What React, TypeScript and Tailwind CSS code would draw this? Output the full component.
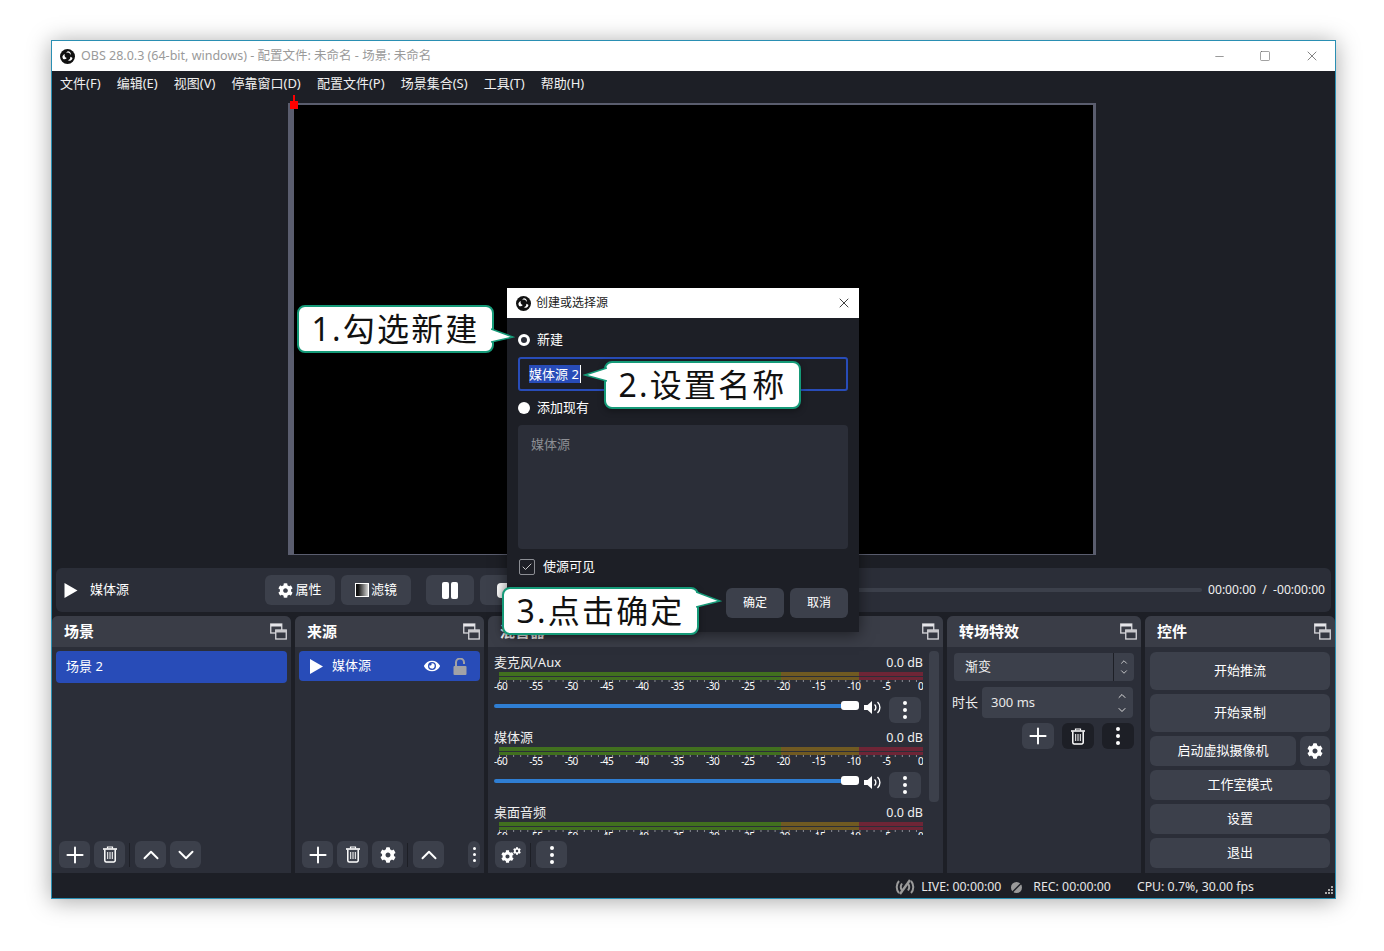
import React from 'react';
import { Plus, ChevronUp, ChevronDown, Minus, Square, X, Check } from 'lucide-react';
import { FaCog, FaEye } from 'react-icons/fa';

const ObsLogo = ({ size = 15 }: { size?: number }) => (
  <svg width={size} height={size} viewBox="0 0 24 24" className="shrink-0">
    <circle cx="12" cy="12" r="12" fill="#111" />
    <path d="M12.5 3.5a5 5 0 0 1 4.6 6.6 4.4 4.4 0 0 0-7-3.4A5 5 0 0 1 12.5 3.5z" fill="#fff" />
    <path d="M20 14.5a5 5 0 0 1-7.6 3.6 4.4 4.4 0 0 0 3.9-5.8 5 5 0 0 1 3.7 2.2z" fill="#fff" />
    <path d="M5 16a5 5 0 0 1 2.9-8 4.4 4.4 0 0 0 3 6.4A5 5 0 0 1 5 16z" fill="#fff" />
  </svg>
);

const DockIcon = () => (
  <svg width="17" height="17" viewBox="0 0 17 17" className="shrink-0">
    <rect x="0.75" y="1" width="11" height="9" fill="none" stroke="#d8d8dc" strokeWidth="1.3" />
    <rect x="0.75" y="1" width="11" height="2.5" fill="#e6e6ea" />
    <rect x="5.75" y="7" width="10.5" height="9" fill="#343741" stroke="#d8d8dc" strokeWidth="1.3" />
    <rect x="5.75" y="7" width="10.5" height="2.5" fill="#c8c8cc" />
  </svg>
);

const TrashIcon = () => (
  <svg width="16" height="17" viewBox="0 0 16 17" fill="none" stroke="#fff">
    <path d="M1 3h14" strokeWidth="1.6" />
    <path d="M5.5 2.5V1h5v1.5" strokeWidth="1.2" />
    <path d="M2.8 3.5v11a1.5 1.5 0 0 0 1.5 1.5h7.4a1.5 1.5 0 0 0 1.5-1.5v-11" strokeWidth="1.5" />
    <path d="M5.7 6v7M8 6v7M10.3 6v7" strokeWidth="1" />
  </svg>
);

const PlayIcon = ({ w = 13, h = 15 }: { w?: number; h?: number }) => (
  <svg width={w} height={h} viewBox="0 0 13 15" className="shrink-0">
    <path d="M0 0 13 7.5 0 15z" fill="#fff" />
  </svg>
);

const Dots = ({ size = 3 }: { size?: number }) => (
  <div className="flex flex-col items-center gap-[3px]">
    {[0, 1, 2].map(i => (
      <span key={i} className="rounded-full bg-white" style={{ width: size + 1, height: size + 1 }} />
    ))}
  </div>
);

const VolumeIcon = () => (
  <svg width="17" height="15" viewBox="0 0 17 15" fill="none">
    <path d="M0 5h3.5L8 1v13L3.5 10H0z" fill="#fff" />
    <path d="M10.5 4.5a4 4 0 0 1 0 6M13.5 2a7.5 7.5 0 0 1 0 11" stroke="#fff" strokeWidth="1.4" />
  </svg>
);

const IconBtn = ({ children, className = '' }: { children: React.ReactNode; className?: string }) => (
  <button className={`flex h-[27px] w-[31px] shrink-0 items-center justify-center rounded-md bg-[#3c404b] text-white ${className}`}>
    {children}
  </button>
);

const Sep = () => <div className="mr-px h-[24px] w-px bg-[#1d1f26]" />;

const Dock = ({ title, width, children }: { title: string; width: string; children: React.ReactNode }) => (
  <section className={`flex h-full shrink-0 flex-col overflow-hidden rounded-t-md bg-[#2b2e38] ${width}`}>
    <header className="flex h-[31px] shrink-0 items-center justify-between bg-[#3a3d47] pl-3 pr-1">
      <h2 className="text-[15px] font-bold text-white">{title}</h2>
      <DockIcon />
    </header>
    {children}
  </section>
);

const ticks = ['-60', '-55', '-50', '-45', '-40', '-35', '-30', '-25', '-20', '-15', '-10', '-5', '0'];

const Meter = () => (
  <div className="pl-[5px]">
    <div className="flex h-[8px] w-[424px] flex-col gap-px">
      {[0, 1].map(i => (
        <div key={i} className="flex flex-1">
          <div className="w-[282px] bg-[#41701f]" />
          <div className="w-[78px] bg-[#705a22]" />
          <div className="w-[64px] bg-[#6e2536]" />
        </div>
      ))}
    </div>
    <svg width="425" height="4" className="block">
      {Array.from({ length: 61 }).map((_, i) => (
        <line key={i} x1={i * 7.067 + 0.5} x2={i * 7.067 + 0.5} y1="0" y2={i % 5 === 0 ? 4 : 2} stroke="#8a8c94" />
      ))}
    </svg>
  </div>
);

const Channel = ({ name }: { name: string }) => (
  <div className="h-[75px] shrink-0">
    <div className="flex h-[20px] items-center justify-between pt-[2px] text-[13px] text-[#f0f0f0]">
      <span>{name}</span>
      <span className="text-[12.5px]">0.0 dB</span>
    </div>
    <Meter />
    <div className="-mt-[3px] flex h-[11px] w-[429px] justify-between text-[10px] leading-[11px] tracking-[-0.5px] text-white">
      {ticks.map(t => (
        <span key={t} className="w-[5px] whitespace-nowrap">{t}</span>
      ))}
    </div>
    <div className="mt-[6px] flex items-center">
      <div className="mb-[10px] flex w-[365px] items-center">
        <div className="h-1 w-[347px] rounded-l-full bg-[#2f7ed3]" />
        <div className="h-[9px] w-[18px] rounded-[3px] bg-white" />
      </div>
      <div className="mb-[6px] ml-[5px] w-[25px]"><VolumeIcon /></div>
      <button className="-mt-[1px] flex h-[26px] w-[32px] items-center justify-center rounded-md bg-[#3c404b]">
        <Dots />
      </button>
    </div>
  </div>
);

const CtrlBtn = ({ children, h = 'h-[30px]', className = 'w-full' }: { children: React.ReactNode; h?: string; className?: string }) => (
  <button className={`flex shrink-0 items-center justify-center rounded-md bg-[#3c404b] text-[13px] text-white ${h} ${className}`}>
    {children}
  </button>
);

const Callout = ({ text, className, tail }: { text: string; className: string; tail: React.ReactNode }) => (
  <div className={`absolute z-20 flex h-[48px] w-[197px] items-center justify-center rounded-lg border-2 border-[#159a78] bg-white text-[32px] tracking-[2.2px] text-[#111] shadow-[0_2px_6px_rgba(0,0,0,0.35)] ${className}`}>
    {text}
    {tail}
  </div>
);

const App: React.FC = () => {
  return (
    <div
      className="h-[951px] overflow-hidden bg-white pl-[51px] pt-[40px]"
      style={{ fontFamily: '"Noto Sans", "Noto Sans CJK SC", sans-serif' }}
    >
      <div className="relative flex h-[859px] w-[1285px] flex-col border border-[#2a8fb3] bg-[#1d1f26] shadow-[0_2px_22px_rgba(0,0,0,0.35)]">
        {/* title bar */}
        <div className="flex h-[30px] shrink-0 items-center bg-white pl-[8px] text-[12.5px] text-[#9a9a9a]">
          <ObsLogo />
          <span className="ml-[6px]">OBS 28.0.3 (64-bit, windows) - 配置文件: 未命名 - 场景: 未命名</span>
          <div className="ml-auto flex items-center text-[#555]">
            <Minus size={13} strokeWidth={1.1} className="mr-[33px]" />
            <Square size={12} strokeWidth={1.1} className="mr-[33px]" />
            <X size={16} strokeWidth={1.1} className="mr-[15px]" />
          </div>
        </div>

        {/* menu */}
        <nav className="flex h-[24px] shrink-0 items-center gap-[16.1px] pl-2 pt-px text-[13px] text-[#f0f0f0]">
          {['文件(F)', '编辑(E)', '视图(V)', '停靠窗口(D)', '配置文件(P)', '场景集合(S)', '工具(T)', '帮助(H)'].map(m => (
            <span key={m}>{m}</span>
          ))}
        </nav>

        {/* preview */}
        <div className="h-[473px] shrink-0 pl-[236px] pt-[8px]">
          <div className="relative h-[452px] w-[808px] border-b border-l-[6px] border-r-[3px] border-t-2 border-[#5a5d6e] bg-black">
            <div className="absolute -left-[3px] -top-[4px] h-[8px] w-[8px] -translate-x-[1px] bg-[#f00]" />
            <div className="absolute -left-[1px] -top-[10px] h-[7px] w-[2px] bg-[#f00]" />
          </div>
        </div>

        {/* transport */}
        <div className="ml-[4px] flex h-[44px] w-[1275px] shrink-0 items-center rounded-md bg-[#2b2e38] pl-[8px] pr-[6px] text-[13px] text-white">
          <PlayIcon w={14} h={15} />
          <span className="ml-[12px] w-[175px]">媒体源</span>
          <button className="flex h-[30px] w-[70px] items-center justify-center gap-[2px] rounded-md bg-[#3c404b]">
            <FaCog size={15} />属性
          </button>
          <button className="ml-[6px] flex h-[30px] w-[70px] items-center justify-center gap-[2px] rounded-md bg-[#3c404b]">
            <svg width="14" height="14" viewBox="0 0 14 14">
              <defs>
                <linearGradient id="flt" x1="0" x2="1" y1="0" y2="0">
                  <stop offset="0.2" stopColor="#111" />
                  <stop offset="1" stopColor="#ddd" />
                </linearGradient>
              </defs>
              <rect x="0.5" y="0.5" width="13" height="13" fill="url(#flt)" stroke="#fff" />
            </svg>
            滤镜
          </button>
          <button className="ml-[15px] flex h-[30px] w-[48px] items-center justify-center gap-[2px] rounded-md bg-[#3c404b]">
            <span className="h-[17px] w-[7px] rounded-[2px] bg-white" />
            <span className="h-[17px] w-[7px] rounded-[2px] bg-white" />
          </button>
          <button className="ml-[6px] flex h-[30px] w-[48px] items-center justify-center rounded-md bg-[#3c404b]">
            <span className="h-[15px] w-[15px] rounded-sm bg-white" />
          </button>
          <div className="ml-[20px] h-1 flex-1 rounded-full bg-[#3c404b]" />
          <span className="ml-[6px] text-[12.1px] text-[#f0f0f0]">00:00:00&nbsp;&nbsp;/&nbsp;&nbsp;-00:00:00</span>
        </div>

        {/* docks */}
        <div className="mt-[4px] flex h-[257px] shrink-0 gap-1">
          <Dock title="场景" width="w-[239px]">
            <div className="flex flex-1 flex-col justify-between px-1 pb-[5px] pt-1">
              <div className="flex h-[32px] items-center rounded-[4px] bg-[#284cb8] pl-[10px] text-[13px] text-white">场景 2</div>
              <div className="flex items-center gap-1 pl-[3px]">
                <IconBtn><Plus size={26} strokeWidth={1.8} /></IconBtn>
                <IconBtn><TrashIcon /></IconBtn>
                <Sep />
                <IconBtn><ChevronUp size={26} strokeWidth={1.8} /></IconBtn>
                <IconBtn><ChevronDown size={26} strokeWidth={1.8} /></IconBtn>
              </div>
            </div>
          </Dock>

          <Dock title="来源" width="w-[189px]">
            <div className="flex flex-1 flex-col justify-between px-1 pb-[5px] pt-1">
              <div className="flex h-[30px] items-center rounded-[4px] bg-[#284cb8] pl-[11px] text-[13px] text-white">
                <PlayIcon />
                <span className="ml-[9px]">媒体源</span>
                <FaEye size={16} className="ml-auto" />
                <svg width="14" height="17" viewBox="0 0 14 17" className="ml-[13px] mr-[13px]">
                  <path d="M3 8V4.5a4 4 0 0 1 8 0V6" fill="none" stroke="#a2a2a6" strokeWidth="2" />
                  <rect x="0.5" y="8" width="13" height="9" rx="1" fill="#a2a2a6" />
                </svg>
              </div>
              <div className="flex items-center gap-1 pl-[3px]">
                <IconBtn><Plus size={26} strokeWidth={1.8} /></IconBtn>
                <IconBtn><TrashIcon /></IconBtn>
                <IconBtn><FaCog size={16} /></IconBtn>
                <Sep />
                <IconBtn><ChevronUp size={26} strokeWidth={1.8} /></IconBtn>
                <IconBtn className="ml-auto !w-[12px]"><Dots size={2} /></IconBtn>
              </div>
            </div>
          </Dock>

          <Dock title="混音器" width="w-[455px]">
            <div className="flex flex-1 flex-col justify-between pb-[5px]">
              <div className="flex pl-[6px] pt-[4px]">
                <div className="mt-px flex h-[183px] w-[429px] flex-col overflow-hidden">
                  <Channel name="麦克风/Aux" />
                  <Channel name="媒体源" />
                  <Channel name="桌面音频" />
                </div>
                <div className="ml-[6px] h-[151px] w-[10px] rounded-sm bg-[#3c404b]" />
              </div>
              <div className="flex items-center gap-1 pl-[7px]">
                <IconBtn>
                  <div className="flex items-start">
                    <FaCog size={13} className="mt-[3px]" />
                    <FaCog size={8} className="-ml-px" />
                  </div>
                </IconBtn>
                <Sep />
                <IconBtn><Dots /></IconBtn>
              </div>
            </div>
          </Dock>

          <Dock title="转场特效" width="w-[194px]">
            <div className="flex flex-col px-[5px] pt-[6px] text-[13px] text-[#f0f0f0]">
              <div className="ml-[2px] flex h-[28px] w-[180px] items-center rounded-[4px] bg-[#3c404b]">
                <span className="flex-1 pl-[11px]">渐变</span>
                <div className="flex h-full w-[21px] flex-col items-center justify-center border-l border-[#1d1f26] text-[#ddd]">
                  <ChevronUp size={10} />
                  <ChevronDown size={10} />
                </div>
              </div>
              <div className="mt-[6px] flex items-center">
                <span className="w-[30px]">时长</span>
                <div className="flex h-[31px] w-[151px] items-center rounded-[4px] bg-[#3c404b] pl-[9px]">
                  <span className="flex-1 text-[#e8e8e8]">300 ms</span>
                  <div className="mr-[5px] flex flex-col gap-[2px] text-[#ddd]">
                    <ChevronUp size={12} />
                    <ChevronDown size={12} />
                  </div>
                </div>
              </div>
              <div className="mr-[2px] mt-[5px] flex justify-end gap-2">
                <button className="flex h-[26px] w-[32px] items-center justify-center rounded-md bg-[#3c404b]"><Plus size={26} className="text-white" strokeWidth={1.8} /></button>
                <button className="flex h-[26px] w-[32px] items-center justify-center rounded-md bg-[#1d1f26]"><TrashIcon /></button>
                <button className="flex h-[26px] w-[32px] items-center justify-center rounded-md bg-[#1d1f26]"><Dots /></button>
              </div>
            </div>
          </Dock>

          <Dock title="控件" width="w-[190px]">
            <div className="flex flex-col gap-1 px-[5px] pt-[5px]">
              <CtrlBtn h="h-[38px]">开始推流</CtrlBtn>
              <CtrlBtn h="h-[38px]">开始录制</CtrlBtn>
              <div className="flex gap-1">
                <CtrlBtn className="w-[146px]">启动虚拟摄像机</CtrlBtn>
                <CtrlBtn className="w-[30px]"><FaCog size={16} /></CtrlBtn>
              </div>
              <CtrlBtn>工作室模式</CtrlBtn>
              <CtrlBtn>设置</CtrlBtn>
              <CtrlBtn>退出</CtrlBtn>
            </div>
          </Dock>
        </div>

        {/* status bar */}
        <footer className="relative flex h-[25px] shrink-0 items-center justify-end pr-[81px] pt-[3px] text-[12.3px] text-[#e8e8e8]">
          <svg width="20" height="16" viewBox="0 0 20 16" fill="none" stroke="#9a9a9a" strokeWidth="2">
            <path d="M4 2a9 9 0 0 0 0 12M7 4.5a6 6 0 0 0 0 7M16 2a9 9 0 0 1 0 12M13 4.5a6 6 0 0 1 0 7" />
            <path d="M5 15 15 1" strokeWidth="2.4" />
          </svg>
          <span className="ml-[6px]">LIVE: 00:00:00</span>
          <svg width="13" height="13" viewBox="0 0 13 13" className="ml-[9px]">
            <circle cx="6.5" cy="6.5" r="5.5" fill="#9a9a9a" />
            <path d="M1 12.5 12.5 1" stroke="#1d1f26" strokeWidth="1.5" />
          </svg>
          <span className="ml-[10px]">REC: 00:00:00</span>
          <span className="ml-[26px]">CPU: 0.7%, 30.00 fps</span>
          <svg width="12" height="12" viewBox="0 0 12 12" fill="#aaa" className="absolute bottom-[1px] right-[1px]">
            <rect x="9" y="1" width="2" height="2" />
            <rect x="6" y="4" width="2" height="2" />
            <rect x="9" y="4" width="2" height="2" />
            <rect x="3" y="7" width="2" height="2" />
            <rect x="6" y="7" width="2" height="2" />
            <rect x="9" y="7" width="2" height="2" />
          </svg>
        </footer>

        {/* modal */}
        <div className="absolute left-[455px] top-[247px] z-10 flex h-[344px] w-[352px] flex-col bg-[#1d1f26] shadow-[0_2px_14px_rgba(0,0,0,0.5)]">
          <div className="flex h-[30px] shrink-0 items-center bg-white pl-[9px] pr-[7px] text-[12px] text-[#222]">
            <ObsLogo />
            <span className="ml-[5px]">创建或选择源</span>
            <X size={16} strokeWidth={1.3} className="ml-auto text-[#222]" />
          </div>
          <div className="flex flex-1 flex-col px-[11px] text-[13px] text-white">
            <label className="mt-[13px] flex h-[18px] items-center">
              <span className="h-[12px] w-[12px] rounded-full border-[3px] border-white bg-[#2b2e38]" />
              <span className="ml-[7px]">新建</span>
            </label>
            <div className="mt-[8px] flex h-[34px] w-[330px] items-center rounded-[3px] border-2 border-[#284cb8] pl-[9px]">
              <span className="bg-[#284cb8] pr-px leading-[18px]">媒体源 2</span>
              <span className="h-[18px] w-px bg-white" />
            </div>
            <label className="mt-[8px] flex h-[18px] items-center">
              <span className="h-[12px] w-[12px] rounded-full bg-white" />
              <span className="ml-[7px]">添加现有</span>
            </label>
            <div className="mt-[8px] h-[124px] w-[330px] rounded-[4px] bg-[#2b2e38] pl-[13px] pt-[10px] text-[#8c8e94]">媒体源</div>
            <label className="mt-[10px] flex h-[16px] items-center">
              <span className="ml-px flex h-[16px] w-[16px] items-center justify-center rounded-[2px] border border-[#8c8e94] text-[#c8c8c8]">
                <Check size={12} strokeWidth={2} />
              </span>
              <span className="ml-[8px]">使源可见</span>
            </label>
            <div className="mt-[13px] flex justify-end gap-[6px] text-[12px]">
              <button className="h-[30px] w-[58px] rounded-md bg-[#3c404b]">确定</button>
              <button className="h-[30px] w-[58px] rounded-md bg-[#3c404b]">取消</button>
            </div>
          </div>
        </div>

        {/* callouts */}
        <Callout
          text="1.勾选新建"
          className="left-[245px] top-[264px]"
          tail={
            <svg width="24" height="20" viewBox="0 0 24 20" className="absolute -right-[23px] top-[20px]">
              <path d="M0 2 22 10 0 15z" fill="#fff" />
              <path d="M0 2 22 10 0 15" fill="none" stroke="#159a78" strokeWidth="1.5" />
            </svg>
          }
        />
        <Callout
          text="2.设置名称"
          className="left-[552px] top-[320px]"
          tail={
            <svg width="24" height="20" viewBox="0 0 24 20" className="absolute -left-[23px] top-[0px]">
              <path d="M24 5 2 12 24 18z" fill="#fff" />
              <path d="M24 5 2 12 24 18" fill="none" stroke="#159a78" strokeWidth="1.5" />
            </svg>
          }
        />
        <Callout
          text="3.点击确定"
          className="left-[450px] top-[546px]"
          tail={
            <svg width="26" height="20" viewBox="0 0 26 20" className="absolute -right-[25px] top-[1px]">
              <path d="M0 2 24 11 0 17z" fill="#fff" />
              <path d="M0 2 24 11 0 17" fill="none" stroke="#159a78" strokeWidth="1.5" />
            </svg>
          }
        />
      </div>
    </div>
  );
};

export default App;
